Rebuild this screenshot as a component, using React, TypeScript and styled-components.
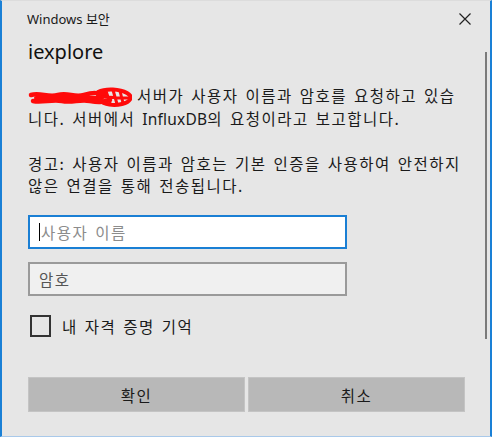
import React from "react";
import styled, { createGlobalStyle } from "styled-components";

const Global = createGlobalStyle`
  html, body { margin: 0; padding: 0; background: #e6e6e6; }
  * { box-sizing: border-box; }
`;

const FONT = `"Segoe UI", "Noto Sans", "Noto Sans CJK KR", sans-serif`;
const KFONT = `"Noto Sans CJK KR", "Noto Sans", sans-serif`;

const Window = styled.div`
  position: relative;
  width: 492px;
  height: 437px;
  background: #e6e6e6;
  border-left: 2px solid #1a80d6;
  border-right: 2px solid #1a80d6;
  border-bottom: 1px solid #a9c9ea;
  border-top: 1px solid #dcdcdc;
  overflow: hidden;
  display: flex;
  flex-direction: column;
  font-family: ${KFONT};
  color: #1a1a1a;
`;

const TitleBar = styled.div`
  height: 34px;
  display: flex;
  align-items: center;
  justify-content: space-between;
  padding: 0 18px 0 25px;
`;

const TitleText = styled.span`
  font-family: ${FONT};
  font-size: 13px;
  color: #1a1a1a;
`;

const CloseBtn = styled.div`
  width: 14px;
  height: 14px;
  display: flex;
  align-items: center;
  justify-content: center;
  margin-top: 1px;
`;

const Scrollbar = styled.div`
  position: absolute;
  right: 3px;
  top: 51px;
  width: 2px;
  height: 287px;
  background: #7a7a7a;
`;

const Content = styled.div`
  padding: 0 0 0 26px;
  display: flex;
  flex-direction: column;
`;

const AppName = styled.div`
  font-family: ${FONT};
  font-size: 20px;
  line-height: 28px;
  margin-top: 3px;
  color: #111;
`;

const Para = styled.p<{ $mt: number }>`
  margin: ${(p) => p.$mt}px 0 0 0;
  font-family: ${KFONT};
  font-size: 15.5px;
  line-height: 22px;
  letter-spacing: 1.5px;
  word-spacing: 2px;
  color: #1a1a1a;
  white-space: nowrap;
`;

const Latin = styled.span`
  font-family: ${FONT};
  letter-spacing: 0.2px;
`;

const Scribble = styled.svg`
  display: inline-block;
  vertical-align: -5px;
  width: 104px;
  height: 20px;
  margin-right: -2px;
`;

const Field = styled.div<{ $focused?: boolean }>`
  width: 319px;
  height: 34px;
  margin-top: ${(p) => (p.$focused ? 19 : 13)}px;
  border: 2px solid ${(p) => (p.$focused ? "#1a7fd4" : "#9a9a9a")};
  background: ${(p) => (p.$focused ? "#ffffff" : "#f0f0f0")};
  display: flex;
  align-items: center;
  padding-left: 9px;
  font-family: ${KFONT};
  font-size: 15.5px;
  letter-spacing: 1.5px;
`;

const Caret = styled.span`
  width: 1px;
  height: 18px;
  background: #000;
  margin-right: 1px;
`;

const Placeholder = styled.span<{ $dark?: boolean }>`
  color: ${(p) => (p.$dark ? "#555555" : "#8c8c8c")};
  word-spacing: 2px;
`;

const CheckRow = styled.label`
  display: flex;
  align-items: center;
  gap: 11px;
  margin-top: 19px;
  font-family: ${KFONT};
  font-size: 15.5px;
  letter-spacing: 1.5px;
  word-spacing: 2px;
  color: #1a1a1a;
`;

const Box = styled.span`
  width: 21px;
  height: 22px;
  border: 2px solid #333333;
  background: #e6e6e6;
  margin-left: 2px;
`;

const Buttons = styled.div`
  display: grid;
  grid-template-columns: 217px 217px;
  gap: 3px;
  margin-top: 40px;
`;

const Button = styled.div`
  height: 35px;
  background: #b8b8b8;
  border: 1px solid #c4c4c4;
  display: flex;
  align-items: center;
  justify-content: center;
  font-family: ${KFONT};
  font-size: 15.5px;
  letter-spacing: 1.5px;
  color: #1a1a1a;
`;

export default function App() {
  return (
    <>
      <Global />
      <Window>
        <TitleBar>
          <TitleText>Windows 보안</TitleText>
          <CloseBtn>
            <svg width="12" height="12" viewBox="0 0 12 12">
              <path d="M0.5 0.5 L11.5 11.5 M11.5 0.5 L0.5 11.5" stroke="#222" strokeWidth="1.2" fill="none" />
            </svg>
          </CloseBtn>
        </TitleBar>
        <Scrollbar />
        <Content>
          <AppName>iexplore</AppName>
          <Para $mt={18}>
            <Scribble viewBox="0 0 104 20">
              <g stroke="#ff0a0a" fill="none" strokeLinecap="round" strokeLinejoin="round">
                <path strokeWidth="4.5" d="M3 8 C12 5 20 11 30 8 S46 11 56 8 S70 6 78 8" />
                <path strokeWidth="4.5" d="M5 14 C14 16 24 12 34 14 S52 12 62 14 S74 15 82 13" />
                <path strokeWidth="4" d="M8 11 L74 11" />
                <path strokeWidth="4" d="M70 5 C78 1 92 2 99 6 S102 15 94 17 S76 18 72 13 S70 8 76 6" />
                <path strokeWidth="3" d="M78 4 L82 16 M85 3 L89 17 M92 4 L95 16 M75 10 L100 11" />
              </g>
            </Scribble>{" "}
            서버가 사용자 이름과 암호를 요청하고 있습
            <br />
            니다. 서버에서 <Latin>InfluxDB</Latin>의 요청이라고 보고합니다.
          </Para>
          <Para $mt={22}>
            경고: 사용자 이름과 암호는 기본 인증을 사용하여 안전하지
            <br />
            않은 연결을 통해 전송됩니다.
          </Para>
          <Field $focused>
            <Caret />
            <Placeholder>사용자 이름</Placeholder>
          </Field>
          <Field>
            <Placeholder $dark>암호</Placeholder>
          </Field>
          <CheckRow>
            <Box />
            내 자격 증명 기억
          </CheckRow>
          <Buttons>
            <Button>확인</Button>
            <Button>취소</Button>
          </Buttons>
        </Content>
      </Window>
    </>
  );
}
